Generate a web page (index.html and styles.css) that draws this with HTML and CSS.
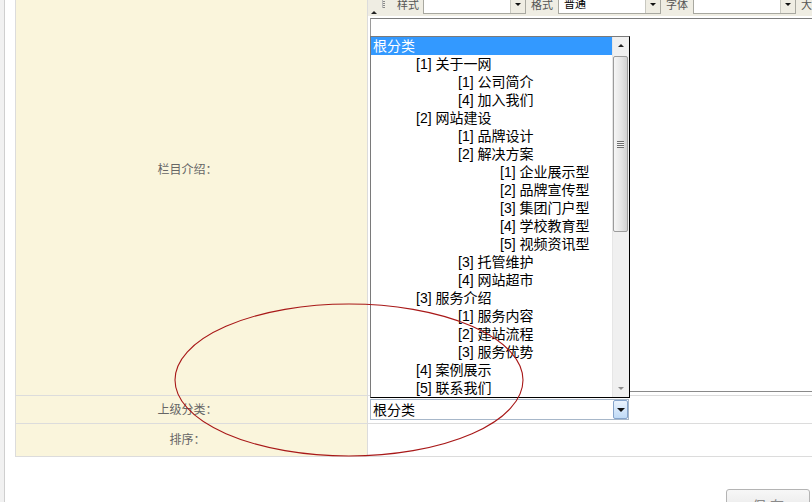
FILE: index.html
```html
<!DOCTYPE html>
<html lang="zh-CN">
<head>
<meta charset="utf-8">
<title>栏目编辑</title>
<link rel="stylesheet" href="styles.css">
</head>
<body>
<div class="page">
  <div class="strip"></div>
  <div class="main">
    <div class="form">
      <div class="label">栏目介绍：</div>
      <div class="field field-editor">
        <div class="toolbar">
          <div class="tb-row">
            <span class="collapse"><span class="tri-up dark"></span></span>
            <span class="grip"></span>
            <span class="tb-label first">样式</span>
            <span class="combo"><span class="combo-box"></span><span class="combo-btn"><span class="tri-down"></span></span></span>
            <span class="tb-label">格式</span>
            <span class="combo"><span class="combo-box">普通</span><span class="combo-btn"><span class="tri-down"></span></span></span>
            <span class="tb-label">字体</span>
            <span class="combo"><span class="combo-box"></span><span class="combo-btn"><span class="tri-down"></span></span></span>
            <span class="tb-label">大小</span>
          </div>
        </div>
        <div class="editarea"></div>
      </div>

      <div class="label">上级分类：</div>
      <div class="field field-select">
        <div class="combo-field">
          <div class="listbox">
            <div class="options">
              <div class="opt l0 selected">根分类</div>
              <div class="opt l1">[1] 关于一网</div>
              <div class="opt l2">[1] 公司简介</div>
              <div class="opt l2">[4] 加入我们</div>
              <div class="opt l1">[2] 网站建设</div>
              <div class="opt l2">[1] 品牌设计</div>
              <div class="opt l2">[2] 解决方案</div>
              <div class="opt l3">[1] 企业展示型</div>
              <div class="opt l3">[2] 品牌宣传型</div>
              <div class="opt l3">[3] 集团门户型</div>
              <div class="opt l3">[4] 学校教育型</div>
              <div class="opt l3">[5] 视频资讯型</div>
              <div class="opt l2">[3] 托管维护</div>
              <div class="opt l2">[4] 网站超市</div>
              <div class="opt l1">[3] 服务介绍</div>
              <div class="opt l2">[1] 服务内容</div>
              <div class="opt l2">[2] 建站流程</div>
              <div class="opt l2">[3] 服务优势</div>
              <div class="opt l1">[4] 案例展示</div>
              <div class="opt l1">[5] 联系我们</div>
            </div>
            <div class="scrollbar">
              <div class="sb-btn"><span class="tri-up dark"></span></div>
              <div class="sb-track">
                <div class="sb-thumb"><span class="sb-grip"></span></div>
              </div>
              <div class="sb-btn"><span class="tri-down light"></span></div>
            </div>
          </div>
          <div class="select">
            <span class="select-text">根分类</span>
            <span class="select-btn"><span class="tri-down"></span></span>
          </div>
        </div>
      </div>

      <div class="label">排序：</div>
      <div class="field"></div>
    </div>
    <div class="actions">
      <button class="btn" type="button">保 存</button>
    </div>
  </div>
</div>
<svg class="annotation" width="812" height="502" viewBox="0 0 812 502" xmlns="http://www.w3.org/2000/svg">
  <ellipse cx="349" cy="380" rx="174" ry="76" fill="none" stroke="#a81818" stroke-width="1.1"/>
</svg>
</body>
</html>
```

FILE: styles.css
```css
html, body {
  margin: 0;
  padding: 0;
  overflow: hidden;
  background: #fff;
}

body {
  font-family: "Liberation Sans", "Noto Sans CJK SC", sans-serif;
  font-size: 12px;
  color: #000;
  position: relative;
  width: 812px;
  height: 502px;
}

.page {
  display: flex;
  min-height: 502px;
}

.strip {
  width: 4px;
  flex: none;
  background: #f1f1f1;
  border-right: 1px solid #cfcfcf;
}

.main {
  margin-left: 10px;
  width: 797px;
  flex: none;
}

/* form grid (borders made by gaps) */
.form {
  margin-top: -57px;
  display: grid;
  grid-template-columns: 351px 470px;
  grid-template-rows: 451px 27px 32px;
  gap: 1px;
  background: #dcdcdc;
  border: 1px solid #dcdcdc;
  width: 822px;
}

.label {
  background: #faf5dc;
  color: #666;
  font-size: 12px;
  line-height: 14px;
  display: flex;
  align-items: center;
  justify-content: center;
  padding-right: 8px;
}

.field {
  background: #fff;
  position: relative;
}

/* editor */
.field-editor {
  display: flex;
  flex-direction: column;
}

.toolbar {
  height: 72px;
  background: #efede3;
  display: flex;
  flex-direction: column;
  justify-content: flex-end;
  margin-bottom: 2px;
}

.tb-row {
  height: 22px;
  display: flex;
  align-items: center;
  margin-bottom: 1px;
}

.collapse {
  width: 12px;
  height: 22px;
  display: flex;
  align-items: flex-end;
  justify-content: center;
  padding-bottom: 1px;
  box-sizing: border-box;
}

.grip {
  width: 3px;
  height: 13px;
  margin-left: 2px;
  margin-top: -6px;
  background: repeating-linear-gradient(to bottom, #8a8a8a 0 1px, transparent 1px 2px);
  border-left: 1px solid #b8b8b8;
  box-sizing: border-box;
}

.tb-label {
  font-size: 11px;
  color: #555;
  margin-left: 5px;
  margin-right: 5px;
  width: 22px;
  white-space: nowrap;
}

.tb-label.first {
  margin-left: 12px;
  margin-right: 4px;
}

.combo {
  display: flex;
  height: 20px;
  border: 1px solid #a8a8a0;
  box-sizing: border-box;
}

.combo-box {
  width: 86px;
  background: #fff;
  font-size: 11px;
  line-height: 18px;
  padding-left: 5px;
  box-sizing: border-box;
}

.combo-btn {
  width: 14px;
  background: #efede3;
  border-left: 1px solid #c8c8c0;
  display: flex;
  align-items: center;
  justify-content: center;
}

.editarea {
  margin-left: 2px;
  height: 374px;
  box-sizing: border-box;
  border-top: 1px solid #7c7c7c;
  border-left: 1px solid #9a9a9a;
  border-bottom: 1px solid #8a8a8a;
  background: #fff;
}

/* triangles */
.tri-up, .tri-down {
  width: 0;
  height: 0;
  border-left: 3px solid transparent;
  border-right: 3px solid transparent;
}

.tri-up {
  border-bottom: 3px solid #222;
}

.tri-down {
  border-top: 3px solid #111;
}

.tri-down.light {
  border-top-color: #8c8c8c;
}

/* select + dropdown list */
.field-select {
  padding: 3px 0 0 2px;
}

.combo-field {
  position: relative;
  width: 259px;
}

.select {
  height: 21px;
  box-sizing: border-box;
  border: 1px solid #a7b7c9;
  display: flex;
  align-items: center;
  background: #fff;
}

.select-text {
  flex: 1;
  font-size: 14px;
  line-height: 18px;
  padding-left: 2px;
}

.select-btn {
  width: 15px;
  height: 19px;
  box-sizing: border-box;
  border: 1px solid #86a4cb;
  border-radius: 2px;
  background: linear-gradient(to bottom, #eaf3fd, #c0daf6);
  display: flex;
  align-items: center;
  justify-content: center;
}

.select-btn .tri-down {
  border-left-width: 4px;
  border-right-width: 4px;
  border-top-width: 4px;
}

.listbox {
  position: absolute;
  left: 0;
  bottom: calc(100% + 1px);
  width: 260px;
  height: 362px;
  box-sizing: border-box;
  border: 1px solid #000;
  border-left-color: #7a7a7a;
  border-top-color: #7a7a7a;
  background: #fff;
  display: flex;
  z-index: 2;
}

.options {
  width: 241px;
  flex: none;
  overflow: hidden;
}

.opt {
  height: 18px;
  line-height: 18px;
  font-size: 14px;
  white-space: nowrap;
  color: #000;
}

.opt.selected {
  background: #3399ff;
  color: #fff;
}

.l0 { padding-left: 2px; }
.l1 { padding-left: 45px; }
.l2 { padding-left: 87px; }
.l3 { padding-left: 129px; }

.scrollbar {
  flex: 1;
  background: #f0f0f0;
  display: flex;
  flex-direction: column;
  border-left: 1px solid #e6e6e6;
}

.sb-btn {
  height: 17px;
  display: flex;
  align-items: center;
  justify-content: center;
  flex: none;
}

.sb-track {
  flex: 1;
  padding-top: 2px;
}

.sb-thumb {
  height: 176px;
  margin: 0 1px 0 0;
  box-sizing: border-box;
  border: 1px solid #9c9c9c;
  border-radius: 2px;
  background: linear-gradient(to right, #f6f6f6, #e4e4e4 60%, #d2d2d2);
  display: flex;
  align-items: center;
  justify-content: center;
}

.sb-grip {
  width: 7px;
  height: 7px;
  background: repeating-linear-gradient(to bottom, #6e6e6e 0 1px, #f4f4f4 1px 2px);
  margin-top: 0;
}

/* actions */
.actions {
  display: flex;
  justify-content: flex-end;
  padding-right: 2px;
  margin-top: 32px;
}

.btn {
  width: 84px;
  height: 32px;
  border: 1px solid #b4b4b4;
  border-radius: 3px;
  background: linear-gradient(to bottom, #f7f7f7, #e3e3e3);
  color: #8a8a8a;
  font-family: "Liberation Sans", "Noto Sans CJK SC", sans-serif;
  font-size: 14px;
  padding: 0;
}

.annotation {
  position: absolute;
  left: 0;
  top: 0;
  pointer-events: none;
  z-index: 5;
}
```
